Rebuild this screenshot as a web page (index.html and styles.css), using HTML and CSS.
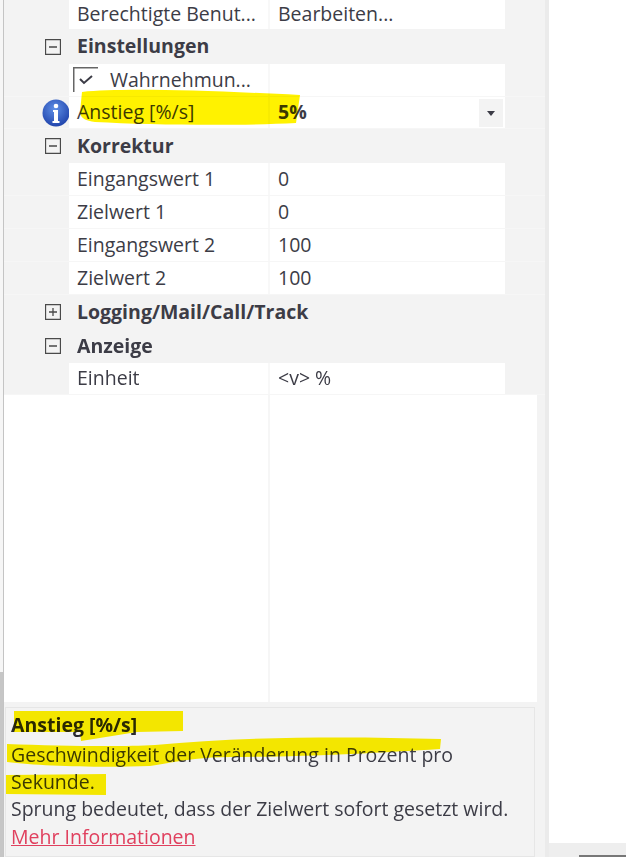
FILE: index.html
```html
<!DOCTYPE html>

<html>

    <head>

        <title> Eigenschaften </title>
        <meta charset="utf-8"/>

        <link rel="stylesheet" href="styles.css">

    </head>

    <body>

        <main class="window">

            <section class="panel">

                <div class="grid">

                    <div class="row row-first">
                        <span class="gutter"></span>
                        <span class="name">Berechtigte Benut...</span>
                        <span class="value">Bearbeiten...</span>
                    </div>

                    <div class="group group-tall">
                        <span class="gutter">
                            <svg class="toggle" viewBox="0 0 16 16"><path d="M.5.5h15v15H.5zM4 8h8" /></svg>
                        </span>
                        <span class="title">Einstellungen</span>
                    </div>

                    <div class="row">
                        <span class="gutter"></span>
                        <span class="name name-check">
                            <svg class="check" viewBox="0 0 25 25">
                                <path class="check-box" d="M.75 25V.75H25"/>
                                <path class="check-mark" d="M7 12l4 4 8-7"/>
                            </svg>
                            Wahrnehmun...
                        </span>
                        <span class="value"></span>
                    </div>

                    <div class="row row-selected">
                        <span class="gutter">
                            <svg class="info" viewBox="0 0 28 28">
                                <defs>
                                    <radialGradient id="infoFill" cx="45%" cy="35%" r="70%">
                                        <stop offset="0" stop-color="#5f8fe6"/>
                                        <stop offset="1" stop-color="#1c3fa8"/>
                                    </radialGradient>
                                </defs>
                                <circle cx="14" cy="14" r="13.5" fill="url(#infoFill)"/>
                                <circle cx="14" cy="7" r="2.300" fill="#fff"/>
                                <path d="M11 11h5v11h1.500v2h-7v-2h1.500v-9h-1z" fill="#fff"/>
                            </svg>
                        </span>
                        <span class="name">Anstieg [%/s]</span>
                        <span class="value value-bold">5%</span>
                        <span class="dropdown"></span>
                    </div>

                    <div class="group">
                        <span class="gutter">
                            <svg class="toggle" viewBox="0 0 16 16"><path d="M.5.5h15v15H.5zM4 8h8" /></svg>
                        </span>
                        <span class="title">Korrektur</span>
                    </div>

                    <div class="row">
                        <span class="gutter"></span>
                        <span class="name">Eingangswert 1</span>
                        <span class="value">0</span>
                    </div>

                    <div class="row">
                        <span class="gutter"></span>
                        <span class="name">Zielwert 1</span>
                        <span class="value">0</span>
                    </div>

                    <div class="row">
                        <span class="gutter"></span>
                        <span class="name">Eingangswert 2</span>
                        <span class="value">100</span>
                    </div>

                    <div class="row">
                        <span class="gutter"></span>
                        <span class="name">Zielwert 2</span>
                        <span class="value">100</span>
                    </div>

                    <div class="group">
                        <span class="gutter">
                            <svg class="toggle" viewBox="0 0 16 16"><path d="M.5.5h15v15H.5zM4 8h8M8 4v8" /></svg>
                        </span>
                        <span class="title">Logging/Mail/Call/Track</span>
                    </div>

                    <div class="group">
                        <span class="gutter">
                            <svg class="toggle" viewBox="0 0 16 16"><path d="M.5.5h15v15H.5zM4 8h8" /></svg>
                        </span>
                        <span class="title">Anzeige</span>
                    </div>

                    <div class="row row-short">
                        <span class="gutter"></span>
                        <span class="name">Einheit</span>
                        <span class="value">&lt;v&gt; %</span>
                    </div>

                </div>

                <div class="empty"></div>

                <div class="help">
                    <h4>Anstieg [%/s]</h4>
                    <p>Geschwindigkeit der Veränderung in Prozent pro Sekunde.</p>
                    <p>Sprung bedeutet, dass der Zielwert sofort gesetzt wird.</p>
                    <a href="#">Mehr Informationen</a>
                </div>

            </section>

            <section class="side">
                <div class="side-bar"><span class="side-thumb"></span></div>
            </section>

        </main>

        <!-- marker strokes drawn over the text -->
        <svg class="marker" viewBox="0 0 626 857">
            <path d="M82 92C120 88 200 90 300 95L296 123C240 126 150 125 95 122C86 121 80 118 80 112z"/>
            <path d="M14 711H183V731L137 732 81 741 80 732H14z"/>
            <path d="M7 744C60 746 120 747 155 745C240 737 340 736 441 739L440 749C380 753 300 757 230 757C200 757 180 761 150 766C100 768 40 766 7 762z"/>
            <path d="M6 775L106 774V795L6 794z"/>
        </svg>

    </body>

</html>
```

FILE: styles.css
```css
* {
    margin: 0;
    padding: 0;
    box-sizing: border-box;
}

html, body {
    width: 100%;
    height: 100%;
    overflow: hidden;
}

body {
    position: relative;
    font-family: 'Open Sans', sans-serif;
    font-size: 19.5px;
    color: #3c3c46;
    background: linear-gradient(to bottom, #f6f6f6 672px, #c6c6c6 672px) no-repeat 0 0 / 3px 100%, white;
}

.window {
    height: 100%;
    margin-left: 3px;
    display: flex;
    border-left: 1px solid #c4c4c4;
    filter: blur(0.4px);
}

.panel {
    width: 541px;
    height: 100%;
    flex: none;
    display: flex;
    flex-direction: column;
    background-color: #f3f3f3;
}

.row, .group {
    display: flex;
    align-items: center;
}

.row {
    height: 33px;
    border-bottom: 1px solid #f6f6f6;
}

.row-first {
    height: 29px;
    border-bottom: none;
}

.row-short, .row-selected {
    height: 32px;
}

.group {
    height: 34px;
}

.group-tall {
    height: 35px;
}

.gutter {
    width: 65px;
    height: 100%;
    flex: none;
    display: flex;
    align-items: center;
    justify-content: flex-end;
    padding-right: 8px;
}

.name {
    width: 199px;
    height: 100%;
    flex: none;
    display: flex;
    align-items: center;
    padding-left: 8px;
    padding-bottom: 2px;
    background-color: white;
    white-space: nowrap;
}

.value {
    width: 237px;
    height: 100%;
    flex: none;
    display: flex;
    align-items: center;
    border-left: 2px solid #f8f8f8;
    padding-left: 8px;
    padding-bottom: 2px;
    background-color: white;
    white-space: pre;
}

.value-bold {
    font-weight: 700;
}

.title {
    padding-left: 8px;
    padding-bottom: 2px;
    font-weight: 700;
    white-space: nowrap;
}

.toggle {
    width: 16px;
    height: 16px;
    fill: none;
    stroke: #4a4a4a;
    stroke-width: 1.3;
}

.name-check {
    gap: 12px;
    padding-left: 4px;
}

.check {
    width: 25px;
    height: 25px;
    fill: none;
}

.check-box {
    stroke: #666666;
    stroke-width: 1.5;
}

.check-mark {
    stroke: #3c3c46;
    stroke-width: 2;
}

.info {
    width: 28px;
    height: 28px;
    margin-right: -9px;
}

.row-selected {
    position: relative;
}

.dropdown {
    position: absolute;
    left: 475px;
    top: 2px;
    width: 24px;
    height: 28px;
    background-color: #f3f3f3;
}

.dropdown::after {
    content: '';
    position: absolute;
    left: 8px;
    top: 12px;
    border-left: 4.5px solid transparent;
    border-right: 4.5px solid transparent;
    border-top: 5px solid #3c3c46;
}

.empty {
    flex: 1;
    margin-right: 8px;
    background: linear-gradient(to right, white 264px, #f6f6f6 264px, #f6f6f6 266px, white 266px);
}

.help {
    height: 150px;
    flex: none;
    margin: 5px 10px 0 1px;
    padding: 3px 5px;
    border: 1px solid #e6e6e6;
    line-height: 27px;
}

.help h4 {
    margin-bottom: 3px;
    font-size: 19.5px;
    font-weight: 700;
    color: #2a2a30;
}

.help a {
    display: inline-block;
    margin-top: 1px;
    color: #e0405e;
}

.side {
    flex: 1;
    display: flex;
    flex-direction: column;
    justify-content: flex-end;
    border-left: 4px solid #ebebeb;
    background-color: white;
}

.side-bar {
    height: 14px;
    padding: 12px 0 0 30px;
    background-color: #eeeeee;
}

.side-thumb {
    display: block;
    height: 2px;
    background-color: #777777;
}

.marker {
    position: absolute;
    left: 0;
    top: 0;
    width: 626px;
    height: 857px;
    mix-blend-mode: multiply;
    fill: #fff200;
}
```
